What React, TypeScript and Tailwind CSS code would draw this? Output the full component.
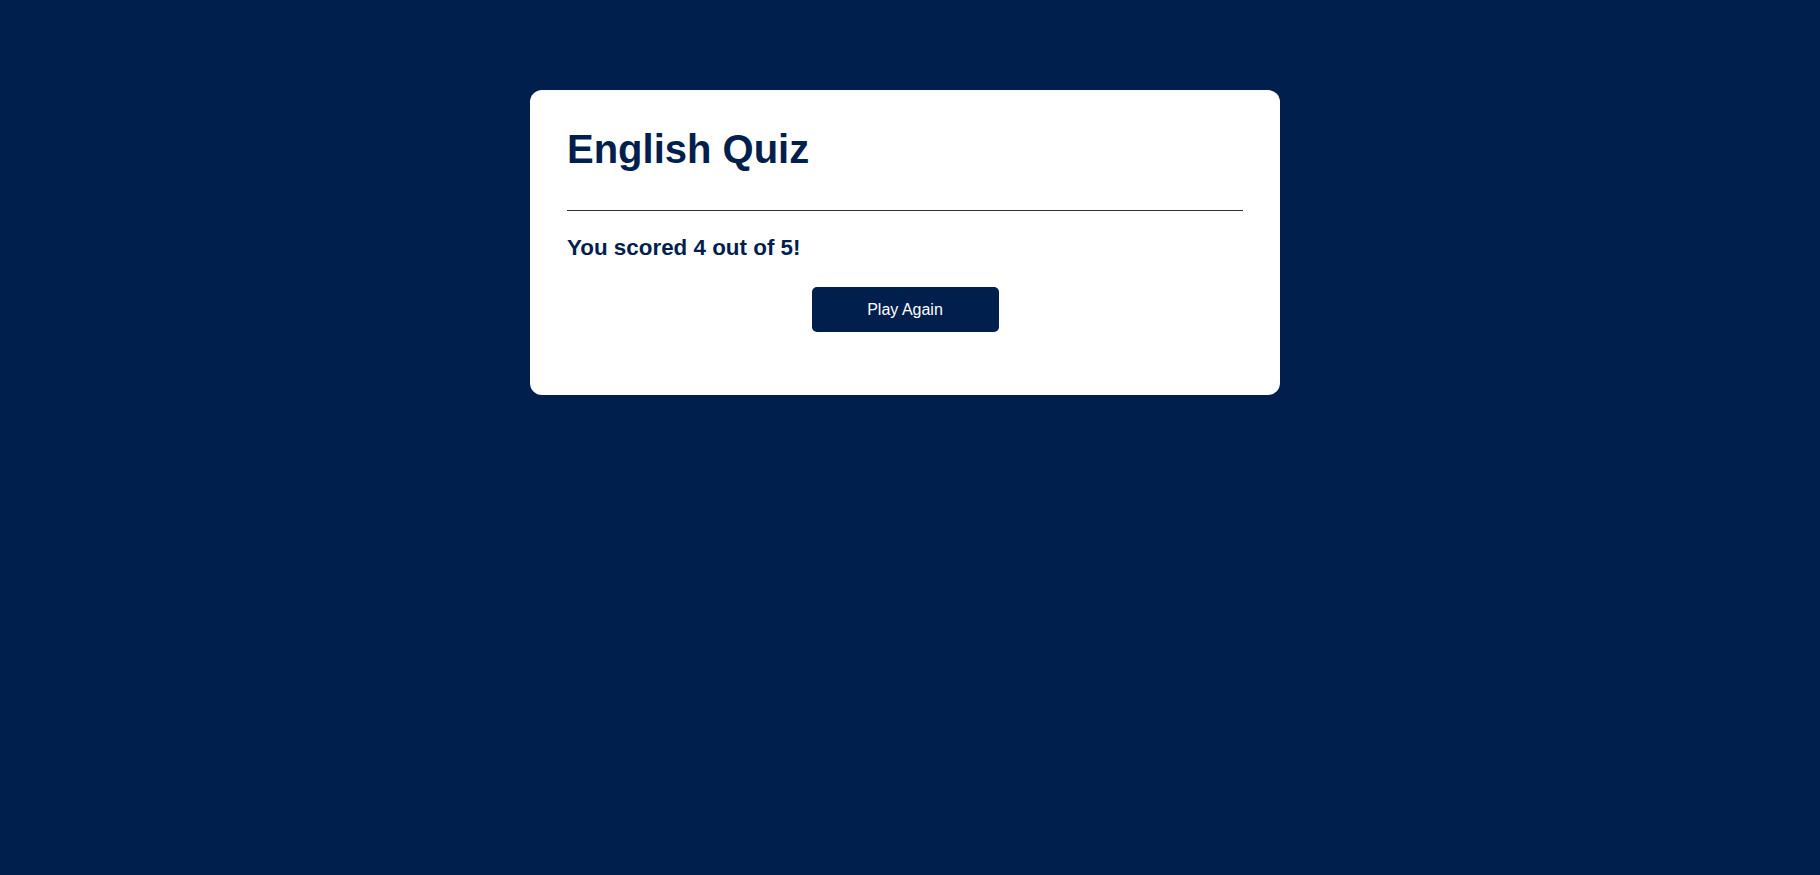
export default function App() {
  return (
    <div className="min-h-screen bg-[#001f4d] pr-[10px] pt-[90px] font-['Liberation_Sans',Arial,sans-serif]">
      <div className="mx-auto w-[750px] rounded-[12px] bg-white px-[37px] pb-[63px] pt-[36px] text-[#001f4d]">
        <h1 className="text-[40px] font-bold leading-[46px]">English Quiz</h1>
        <div className="mt-[38px] h-px bg-[#333333]" />
        <p className="mt-6 text-[22.4px] font-bold leading-[26px]">You scored 4 out of 5!</p>
        <div className="mt-[26px] flex justify-center">
          <button className="h-[45px] w-[187px] rounded-[5px] bg-[#001f4d] text-[16px] text-white">
            Play Again
          </button>
        </div>
      </div>
    </div>
  );
}
